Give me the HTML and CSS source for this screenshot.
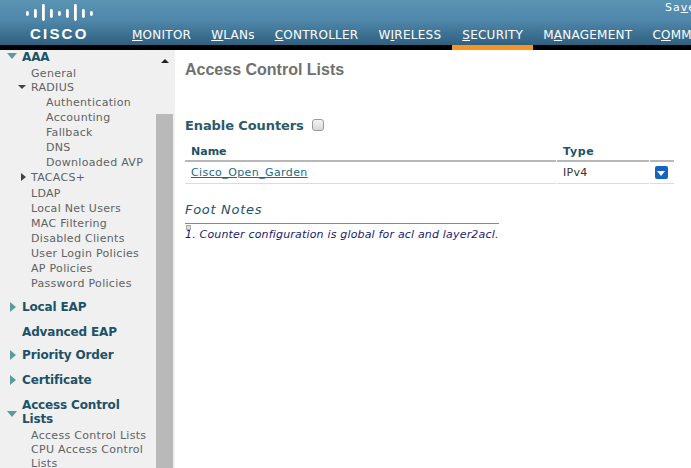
FILE: index.html
```html
<!DOCTYPE html>
<html lang="en">
<head>
    <meta charset="UTF-8">
    <title>Access Control Lists</title>
    <link rel="stylesheet" href="styles.css">
</head>
<body>
    <header class="topbar">
        <div class="logo">
            <svg class="logo-bars" width="72" height="20" viewBox="0 0 72 20">
                <g fill="#fff">
                    <rect x="1" y="9" width="2.8" height="5" rx="1.4"/>
                    <rect x="9" y="7" width="2.8" height="9" rx="1.4"/>
                    <rect x="17" y="2" width="2.8" height="17" rx="1.4"/>
                    <rect x="25" y="7" width="2.8" height="9" rx="1.4"/>
                    <rect x="33" y="9" width="2.8" height="5" rx="1.4"/>
                    <rect x="41" y="7" width="2.8" height="9" rx="1.4"/>
                    <rect x="49" y="2" width="2.8" height="17" rx="1.4"/>
                    <rect x="57" y="7" width="2.8" height="9" rx="1.4"/>
                    <rect x="65" y="9" width="2.8" height="5" rx="1.4"/>
                </g>
            </svg>
            <div class="logo-text">CISCO</div>
        </div>
        <div class="topbar-main">
            <div class="save-link">Sa<u>v</u>e Configuration</div>
            <nav class="menu">
                <a class="menu-item"><u>M</u>ONITOR</a>
                <a class="menu-item"><u>W</u>LANs</a>
                <a class="menu-item"><u>C</u>ONTROLLER</a>
                <a class="menu-item">W<u>I</u>RELESS</a>
                <a class="menu-item menu-item-active"><u>S</u>ECURITY</a>
                <a class="menu-item">M<u>A</u>NAGEMENT</a>
                <a class="menu-item">C<u>O</u>MMANDS</a>
            </nav>
        </div>
    </header>

    <div class="page">
        <aside class="sidebar">
            <div class="tree">
                <div class="head"><span class="tri tri-down-teal"></span>AAA</div>
                <div class="leaf first-leaf">General</div>
                <div class="leaf radius-leaf"><span class="tri tri-down-dark"></span>RADIUS</div>
                <div class="leaf deep">Authentication</div>
                <div class="leaf deep">Accounting</div>
                <div class="leaf deep">Fallback</div>
                <div class="leaf deep">DNS</div>
                <div class="leaf deep">Downloaded AVP</div>
                <div class="leaf"><span class="tri tri-right-dark"></span>TACACS+</div>
                <div class="leaf ldap-leaf">LDAP</div>
                <div class="leaf">Local Net Users</div>
                <div class="leaf">MAC Filtering</div>
                <div class="leaf">Disabled Clients</div>
                <div class="leaf">User Login Policies</div>
                <div class="leaf">AP Policies</div>
                <div class="leaf">Password Policies</div>
                <div class="head head-local"><span class="tri tri-right-teal"></span>Local EAP</div>
                <div class="head head-adv">Advanced EAP</div>
                <div class="head head-prio"><span class="tri tri-right-teal"></span>Priority Order</div>
                <div class="head head-cert"><span class="tri tri-right-teal"></span>Certificate</div>
                <div class="head head-acl"><span class="tri tri-down-teal tri-low"></span>Access Control<br>Lists</div>
                <div class="leaf acl-leaf acl-first">Access Control Lists</div>
                <div class="leaf acl-leaf">CPU Access Control<br>Lists</div>
            </div>
            <div class="scrollbar">
                <div class="scroll-up"></div>
                <div class="scroll-thumb"></div>
            </div>
        </aside>

        <main class="content">
            <h1 class="title">Access Control Lists</h1>
            <div class="counters">
                <span>Enable Counters</span>
                <span class="checkbox"></span>
            </div>
            <div class="acl-table">
                <div class="row row-head">
                    <div class="cell cell-name">Name</div>
                    <div class="cell cell-type">Type</div>
                    <div class="cell cell-arrow"></div>
                </div>
                <div class="row">
                    <div class="cell cell-name"><a class="acl-link">Cisco_Open_Garden</a></div>
                    <div class="cell cell-type">IPv4</div>
                    <div class="cell cell-arrow"><span class="drop-btn"></span></div>
                </div>
            </div>
            <div class="foot-title">Foot Notes</div>
            <div class="foot-body">1. Counter configuration is global for acl and layer2acl.</div>
        </main>
    </div>
</body>
</html>
```

FILE: styles.css
```css
html, body {
    margin: 0;
    height: 100%;
    overflow: hidden;
}
body {
    width: 691px;
    height: 468px;
    font-family: "DejaVu Sans", Verdana, sans-serif;
    font-size: 11px;
    background: #fff;
}
.topbar {
    display: flex;
    height: 45px;
    border-bottom: 5px solid #000;
    background: linear-gradient(#5b93b5, #4f87aa 45%, #2f607f);
    color: #fff;
}
.logo {
    width: 122px;
    flex: none;
    padding: 2px 0 0 25px;
    box-sizing: border-box;
}
.logo-bars {
    display: block;
}
.logo-text {
    margin: 4px 0 0 5px;
    font-family: "Liberation Sans", Arial, sans-serif;
    font-size: 15px;
    line-height: 15px;
    font-weight: bold;
    letter-spacing: 2.2px;
}
.topbar-main {
    flex: 1;
    min-width: 0;
}
.save-link {
    height: 24px;
    padding: 1px 0 0 543px;
    box-sizing: border-box;
    overflow: hidden;
    line-height: 13px;
    letter-spacing: 1px;
    white-space: nowrap;
}
.menu {
    display: flex;
    height: 26px;
    overflow: hidden;
}
.menu-item {
    flex: none;
    height: 26px;
    padding: 4px 10px 0;
    box-sizing: border-box;
    line-height: 15px;
    font-size: 12px;
    letter-spacing: 0.25px;
    white-space: nowrap;
}
.menu-item-active {
    margin-left: 1px;
    border-bottom: 5px solid #f7941d;
}
.page {
    display: flex;
    height: 418px;
}
.sidebar {
    display: flex;
    width: 175px;
    flex: none;
    overflow: hidden;
    background: #f0f0f0;
}
.tree {
    width: 156px;
    flex: none;
    color: #5d6365;
}
.head {
    position: relative;
    padding-left: 22px;
    color: #1d5268;
    font-size: 12px;
    font-weight: bold;
    line-height: 14px;
    letter-spacing: -0.15px;
}
.head-local {
    margin-top: 9px;
}
.head-adv {
    margin-top: 11px;
}
.head-prio {
    margin-top: 9px;
}
.head-cert {
    margin-top: 11px;
}
.head-acl {
    margin-top: 11px;
}
.leaf {
    position: relative;
    padding-left: 31px;
    line-height: 15px;
    letter-spacing: 0.3px;
}
.first-leaf {
    margin-top: 2px;
}
.radius-leaf {
    margin-top: -1px;
}
.ldap-leaf {
    margin-top: 1px;
}
.deep {
    padding-left: 46px;
}
.acl-first {
    margin-top: 3px;
}
.acl-leaf {
    line-height: 14px;
}
.tri {
    position: absolute;
    width: 0;
    height: 0;
}
.tri-down-teal {
    left: 7px;
    top: 3px;
    border-left: 5px solid transparent;
    border-right: 5px solid transparent;
    border-top: 6px solid #5a9aa0;
}
.tri-low {
    top: 13px;
}
.tri-right-teal {
    left: 10px;
    top: 2px;
    border-top: 5px solid transparent;
    border-bottom: 5px solid transparent;
    border-left: 6px solid #5a9aa0;
}
.tri-down-dark {
    left: 18px;
    top: 5px;
    border-left: 4px solid transparent;
    border-right: 4px solid transparent;
    border-top: 4px solid #444;
}
.tri-right-dark {
    left: 21px;
    top: 3px;
    border-top: 4px solid transparent;
    border-bottom: 4px solid transparent;
    border-left: 5px solid #444;
}
.scrollbar {
    width: 17px;
    flex: none;
    margin-right: 2px;
    display: flex;
    flex-direction: column;
}
.scroll-up {
    width: 0;
    height: 0;
    margin: 9px 0 0 5px;
    border-left: 4px solid transparent;
    border-right: 4px solid transparent;
    border-bottom: 4px solid #222;
}
.scroll-thumb {
    flex: 1;
    margin-top: 51px;
    background: #b9b9b9;
}
.content {
    flex: 1;
    min-width: 0;
    padding-left: 10px;
    color: #1d5268;
}
.title {
    margin: 11px 0 0;
    color: #707070;
    font-family: "Liberation Sans", Arial, sans-serif;
    font-size: 16px;
    line-height: 18px;
    font-weight: bold;
}
.counters {
    display: flex;
    align-items: center;
    gap: 8px;
    margin-top: 37px;
    height: 18px;
    font-size: 13px;
    font-weight: bold;
    letter-spacing: -0.1px;
    color: #2a5a6b;
}
.checkbox {
    width: 10px;
    height: 10px;
    border: 1px solid #9a9a9a;
    border-radius: 3px;
    background: linear-gradient(#f4f4f4, #d8d8d8);
}
.acl-table {
    margin-top: 8px;
    width: 489px;
}
.row {
    display: flex;
    gap: 1px;
    height: 22px;
}
.row-head {
    height: 20px;
}
.cell {
    display: flex;
    align-items: center;
    box-sizing: border-box;
    padding-left: 6px;
    border-bottom: 1px solid #dcdcdc;
}
.row-head .cell {
    border-bottom: 2px solid #b8b8b8;
    font-weight: bold;
}
.cell-name {
    width: 371px;
}
.cell-type {
    width: 92px;
    color: #333;
    letter-spacing: 0.3px;
}
.row-head .cell-type {
    color: #1d5268;
    letter-spacing: 0.7px;
}
.cell-arrow {
    flex: 1;
    padding-left: 5px;
}
.acl-link {
    color: #1d6a88;
    text-decoration: underline;
    letter-spacing: 0.4px;
}
.drop-btn {
    position: relative;
    display: block;
    width: 13px;
    height: 13px;
    border-radius: 2px;
    background: #1565c0;
}
.drop-btn::after {
    content: "";
    position: absolute;
    left: 2px;
    top: 5px;
    border-left: 4.5px solid transparent;
    border-right: 4.5px solid transparent;
    border-top: 5px solid #fff;
}
.foot-title {
    margin-top: 18px;
    font-size: 13px;
    line-height: 16px;
    font-style: italic;
    letter-spacing: 0.7px;
    color: #1d5268;
}
.foot-body {
    position: relative;
    width: 314px;
    margin-top: 5px;
    border-top: 1px solid #888;
    padding-top: 4px;
    color: #1a1a6e;
    font-size: 11px;
    font-style: italic;
    line-height: 13px;
    letter-spacing: 0.18px;
    white-space: nowrap;
}
/* tiny broken image marker sitting above the note */
.foot-body::before {
    content: "";
    position: absolute;
    left: 1px;
    top: 1px;
    width: 3px;
    height: 3px;
    border: 1px solid #aaa;
    background: #ddd;
}
```
